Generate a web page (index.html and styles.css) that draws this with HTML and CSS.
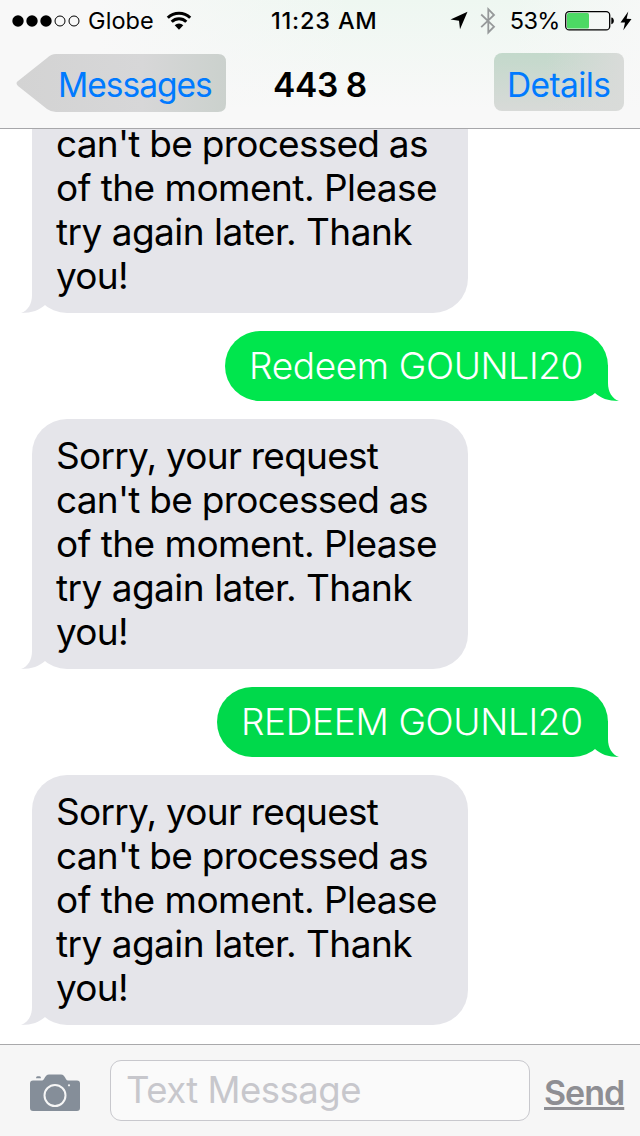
FILE: index.html
```
<!DOCTYPE html>
<html lang="en">

<head>
  <meta charset="UTF-8">
  <meta name="viewport" content="width=device-width, initial-scale=1.0">
  <title>Messages</title>
  <link rel="stylesheet" href="styles.css">
</head>

<body>

  <!-- Status bar and navigation -->
  <header>
    <div class="status-bar">
      <div class="status-left">
        <svg class="signal" width="68" height="12" viewBox="0 0 68 12">
          <circle cx="6" cy="6" r="5.7" />
          <circle cx="20" cy="6" r="5.7" />
          <circle cx="34" cy="6" r="5.7" />
          <circle class="empty" cx="48" cy="6" r="5" />
          <circle class="empty" cx="62" cy="6" r="5" />
        </svg>
        <span class="carrier">Globe</span>
        <svg class="wifi" width="26" height="20" viewBox="0 0 26 20">
          <path d="M1.8 6.8a16 16 0 0 1 22.4 0M5.7 10.8a10.4 10.4 0 0 1 14.6 0" />
          <path class="solid" d="M8.7 14.3a6.2 6.2 0 0 1 8.6 0L13 18.8z" />
        </svg>
      </div>
      <div class="clock">11:23 AM</div>
      <div class="status-right">
        <svg class="location" width="18" height="19" viewBox="0 0 18 19">
          <path d="M17.5 .8L10 18.3L9 9.8L.5 8.5z" />
        </svg>
        <svg class="bluetooth" width="16" height="28" viewBox="0 0 16 28">
          <path d="M1.2 7.5L14 19.7L8.3 25.5V2.2L14 8L1.2 20.2" />
        </svg>
        <span class="percent">53%</span>
        <svg class="battery" width="50" height="20" viewBox="0 0 50 20">
          <rect class="case" x=".7" y=".7" width="44" height="18.2" rx="3.5" />
          <rect class="level" x="2" y="2" width="22" height="15.6" rx="1.5" />
          <path d="M46.3 6.5c3.4 .2 3.4 6.5 0 6.7z" />
        </svg>
        <svg class="bolt" width="12" height="20" viewBox="0 0 12 20">
          <path d="M8.3 .5L.5 11.4L5 11.6L3.3 19.3L11.5 8L6.6 7.8z" />
        </svg>
      </div>
    </div>

    <nav>
      <a class="back-btn" href="#">Messages</a>
      <h1>443 8</h1>
      <a class="details-btn" href="#">Details</a>
    </nav>
  </header>

  <!-- Conversation -->
  <main class="thread">
    <div class="bubble received">
      <span class="tight">Sorry, your request</span>
      <span class="tight">can't be processed as</span>
      <span>of the moment. Please</span>
      <span>try again later. Thank</span>
      <span class="tight">you!</span>
      <svg class="tail" width="40" height="36" viewBox="0 0 40 36"><path d="M11 0V18C11 27 7 33.5 0 36C11 36 18.5 33 24 28L40 10V0z" /></svg>
    </div>
    <div class="bubble sent">
      <span>Redeem GOUNLI20</span>
      <svg class="tail" width="40" height="36" viewBox="0 0 40 36"><path d="M11 0V18C11 27 7 33.5 0 36C11 36 18.5 33 24 28L40 10V0z" /></svg>
    </div>
    <div class="bubble received">
      <span class="tight">Sorry, your request</span>
      <span class="tight">can't be processed as</span>
      <span>of the moment. Please</span>
      <span>try again later. Thank</span>
      <span class="tight">you!</span>
      <svg class="tail" width="40" height="36" viewBox="0 0 40 36"><path d="M11 0V18C11 27 7 33.5 0 36C11 36 18.5 33 24 28L40 10V0z" /></svg>
    </div>
    <div class="bubble sent latest">
      <span>REDEEM GOUNLI20</span>
      <svg class="tail" width="40" height="36" viewBox="0 0 40 36"><path d="M11 0V18C11 27 7 33.5 0 36C11 36 18.5 33 24 28L40 10V0z" /></svg>
    </div>
    <div class="bubble received">
      <span class="tight">Sorry, your request</span>
      <span class="tight">can't be processed as</span>
      <span>of the moment. Please</span>
      <span>try again later. Thank</span>
      <span class="tight">you!</span>
      <svg class="tail" width="40" height="36" viewBox="0 0 40 36"><path d="M11 0V18C11 27 7 33.5 0 36C11 36 18.5 33 24 28L40 10V0z" /></svg>
    </div>
  </main>

  <!-- Message input -->
  <footer>
    <svg class="camera" width="50" height="38" viewBox="0 0 50 38">
      <path d="M3 6.5H12C15 6.5 14.5 .5 19 .5H31C35.5 .5 35 6.5 38 6.5H47Q50 6.5 50 9.5V34Q50 37 47 37H3Q0 37 0 34V9.5Q0 6.5 3 6.5z" />
      <path d="M6 4.3Q6 2.3 7.5 2.3H9.5Q11 2.3 11 4.3z" />
      <circle class="lens" cx="25" cy="21.5" r="10.5" />
      <circle class="dot" cx="39" cy="11.3" r="1.1" />
    </svg>
    <div class="message-input">Text Message</div>
    <a class="send-btn" href="#">Send</a>
  </footer>

</body>

</html>
```
FILE: styles.css
```
/* Global Styling */
* {
  box-sizing: border-box;
}

body {
  font-family: Inter, "Liberation Sans", sans-serif;
  margin: 0;
  width: 640px;
  height: 1136px;
  display: flex;
  flex-direction: column;
  overflow: hidden;
  background-color: #fff;
  color: #000;
}

a {
  text-decoration: none;
}

svg {
  display: block;
  flex: none;
}

/* Header */
header {
  flex: none;
  height: 129px;
  border-bottom: 1px solid #a7a7aa;
  background: linear-gradient(90deg, #f8f8f8 15%, rgba(248, 248, 248, 0) 55%, rgba(248, 248, 248, 0) 80%, rgba(248, 248, 248, 0.8)),
    linear-gradient(#eef7f1, #f8f8f8 85%);
}

.status-bar {
  display: grid;
  grid-template-columns: 258px 1fr 254px;
  align-items: center;
  height: 41px;
  padding: 0 10px 0 12px;
  font-size: 23.5px;
  line-height: 41px;
}

.status-left,
.status-right {
  display: flex;
  align-items: center;
}

.status-right {
  justify-content: flex-end;
}

.signal .empty {
  fill: none;
  stroke: #000;
  stroke-width: 1;
}

.carrier {
  margin-left: 8px;
  letter-spacing: 0.1px;
}

.wifi {
  margin-left: 12px;
}

.wifi path {
  fill: none;
  stroke: #000;
  stroke-width: 3;
}

.wifi .solid {
  fill: #000;
  stroke: none;
}

.clock {
  padding-left: 1px;
  font-weight: 500;
  letter-spacing: 0.8px;
  white-space: nowrap;
}

.location {
  margin-right: 12px;
}

.bluetooth {
  margin-right: 14px;
}

.bluetooth path {
  fill: none;
  stroke: #96999a;
  stroke-width: 1.8;
}

.percent {
  margin-right: 5px;
  letter-spacing: -0.7px;
}

.battery .case {
  fill: none;
  stroke: #000;
  stroke-width: 1.3;
}

.battery .level {
  fill: #4cd964;
}

.bolt {
  margin-left: 5px;
}

/* Navigation */
nav {
  display: grid;
  grid-template-columns: 210px 1fr 210px;
  align-items: start;
  padding: 12px 16px 0;
  font-size: 33.5px;
  line-height: 64px;
}

.back-btn {
  height: 60px;
  padding-left: 42px;
  letter-spacing: -1px;
  color: #007aff;
  background: linear-gradient(90deg, #d3d3d3, #d7d7d8 60%, #cbd1cd);
  clip-path: path("M2 28L31 5Q35 1 40 1H202Q210 1 210 9V51Q210 59 202 59H40Q35 59 31 56L2 33Q-1 30 2 28Z");
}

nav h1 {
  margin: 0;
  font-size: 33.5px;
  font-weight: 600;
  letter-spacing: -0.4px;
  text-align: center;
}

.details-btn {
  justify-self: end;
  width: 130px;
  height: 58px;
  padding-left: 13px;
  border-radius: 8px;
  letter-spacing: -0.6px;
  color: #007aff;
  background: linear-gradient(90deg, rgba(215, 218, 215, 0) 40%, #d9dbd9), linear-gradient(#c3d9cb, #d8dad8);
}

/* Conversation */
.thread {
  flex: 1;
  min-height: 0;
  display: flex;
  flex-direction: column;
  justify-content: flex-end;
  gap: 18px;
  padding: 0 32px 19px;
  overflow: hidden;
}

.bubble {
  position: relative;
  isolation: isolate;
  flex: none;
  border-radius: 35px;
  font-size: 37px;
  letter-spacing: -0.53px;
  line-height: 44px;
  white-space: nowrap;
}

.bubble span {
  display: block;
}

.bubble .tight {
  letter-spacing: -0.74px;
}

.received {
  align-self: flex-start;
  width: 436px;
  padding: 15px 24px;
  background-color: #e5e5ea;
  fill: #e5e5ea;
}

.sent {
  align-self: flex-end;
  width: 383px;
  padding: 13px 24px;
  background-color: #00e64d;
  fill: #00e64d;
  color: #fff;
  font-weight: 350;
  letter-spacing: -0.35px;
}

.latest {
  width: 391px;
  background-color: #00d94b;
  fill: #00d94b;
}

/* Speech tails hang outside the bubble edge */
.tail {
  position: absolute;
  z-index: -1;
  left: -11px;
  bottom: 0;
}

.sent .tail {
  left: auto;
  right: -11px;
  transform: scaleX(-1);
}

/* Message input */
footer {
  flex: none;
  display: flex;
  align-items: flex-start;
  height: 92px;
  padding: 15px 16px 0 30px;
  border-top: 1px solid #a9a9ab;
  background-color: #f6f6f6;
}

.camera {
  margin: 14px 30px 0 0;
  fill: #858e99;
}

.camera .lens {
  fill: none;
  stroke: #f6f6f6;
  stroke-width: 2;
}

.camera .dot {
  fill: #f6f6f6;
}

.message-input {
  flex: none;
  width: 420px;
  height: 61px;
  padding-left: 15px;
  border: 1px solid #c8c8cd;
  border-radius: 11px;
  background-color: #fafafa;
  color: #c7c7cc;
  font-size: 36.5px;
  letter-spacing: -0.5px;
  line-height: 58px;
  white-space: nowrap;
}

.send-btn {
  margin-left: 14px;
  color: #8e8e93;
  font-size: 34px;
  font-weight: 600;
  letter-spacing: -1px;
  line-height: 66px;
  text-decoration: underline;
  text-decoration-thickness: 3px;
  text-underline-offset: 2px;
}
```
